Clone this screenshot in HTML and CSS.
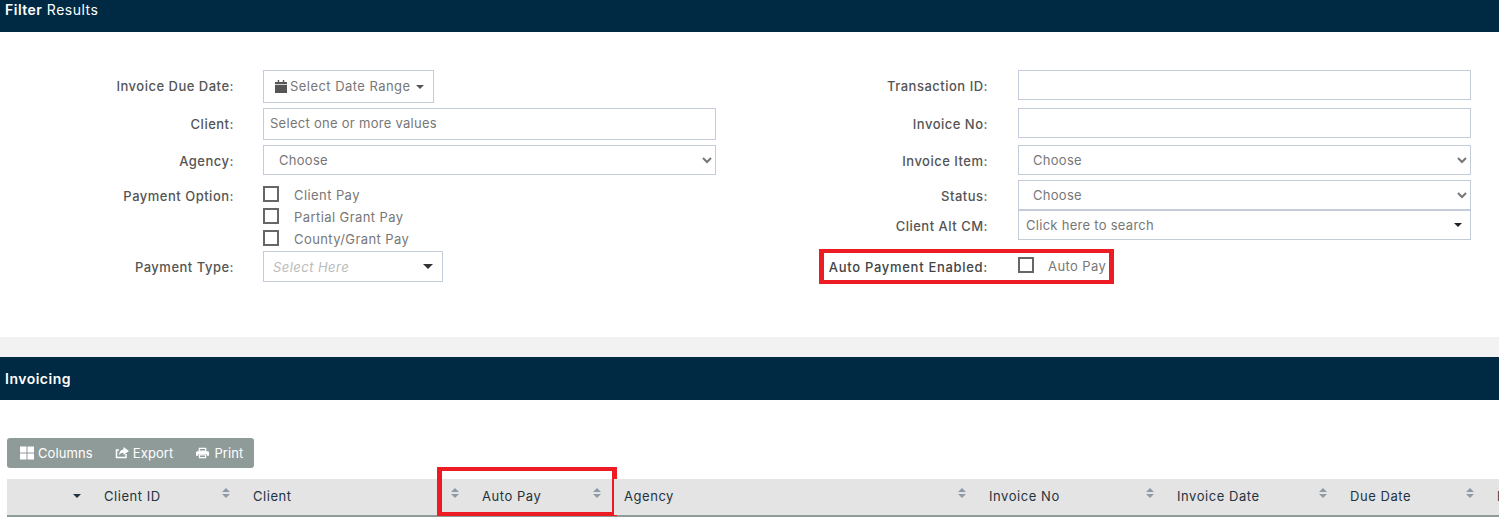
FILE: index.html
```html
<!DOCTYPE html>
<html lang="en">
<head>
<meta charset="utf-8">
<title>Invoicing</title>
<link rel="stylesheet" href="styles.css">
</head>
<body>
<header class="bar bar-filter"><strong>Filter</strong> Results</header>
<form class="filter">
  <div class="col">
    <div class="row row-date">
      <label class="lbl lbl-date">Invoice Due Date:</label>
      <button type="button" class="date-btn">
        <svg class="ico-cal" viewBox="0 0 13 14"><path d="M3 0h1.500v2H3zM8.500 0H10v2H8.500zM0 2h13v2.500H0zM0 5.500h13V14H0z" fill="#555"/></svg>
        <span class="date-txt">Select Date Range</span>
        <span class="caret"></span>
      </button>
    </div>
    <div class="row row-client">
      <label class="lbl">Client:</label>
      <input class="field field-tag" placeholder="Select one or more values">
    </div>
    <div class="row row-agency">
      <label class="lbl lbl-low">Agency:</label>
      <select class="field field-select"><option>Choose</option></select>
    </div>
    <div class="row row-options">
      <label class="lbl lbl-options">Payment Option:</label>
      <div class="options">
        <label class="opt"><input type="checkbox" class="cb"><span>Client Pay</span></label>
        <label class="opt"><input type="checkbox" class="cb"><span>Partial Grant Pay</span></label>
        <label class="opt"><input type="checkbox" class="cb"><span>County/Grant Pay</span></label>
      </div>
    </div>
    <div class="row row-type">
      <label class="lbl">Payment Type:</label>
      <div class="combo"><em>Select Here</em><span class="caret caret-lg"></span></div>
    </div>
  </div>
  <div class="col col-right">
    <div class="row row-r1">
      <label class="lbl lbl-r lbl-low">Transaction ID:</label>
      <input class="field">
    </div>
    <div class="row row-r2">
      <label class="lbl lbl-r lbl-low">Invoice No:</label>
      <input class="field">
    </div>
    <div class="row row-r3">
      <label class="lbl lbl-r lbl-low">Invoice Item:</label>
      <select class="field field-select field-select-r"><option>Choose</option></select>
    </div>
    <div class="row row-r4">
      <label class="lbl lbl-r lbl-low">Status:</label>
      <select class="field field-select field-select-r"><option>Choose</option></select>
    </div>
    <div class="row row-r5">
      <label class="lbl lbl-r lbl-low">Client Alt CM:</label>
      <div class="field search"><span>Click here to search</span><span class="caret caret-dark"></span></div>
    </div>
    <div class="row row-r6">
      <label class="lbl lbl-r lbl-strong">Auto Payment Enabled:</label>
      <label class="opt opt-auto"><input type="checkbox" class="cb"><span>Auto Pay</span></label>
      <span class="mark mark-form"></span>
    </div>
  </div>
</form>
<div class="gap"></div>
<header class="bar bar-invoicing"><strong>Invoicing</strong></header>
<section class="results">
  <div class="toolbar">
    <span class="tool">
      <svg class="ico" viewBox="0 0 14 14"><path d="M0 0.500h6.500v6H0zM7.500 0.500H14v6H7.500zM0 7.500h6.500v6H0zM7.500 7.500H14v6H7.500z" fill="#fff"/></svg>Columns
    </span>
    <span class="tool">
      <svg class="ico" viewBox="0 0 14 14"><path d="M11 8v3.500H1.500V4H4" fill="none" stroke="#fff" stroke-width="1.500"/><path d="M8.500 1L14 5 8.500 9V6.700C6 6.700 4.800 7.500 4 9.500 4 6 6 3.600 8.500 3.400z" fill="#fff"/></svg>Export
    </span>
    <span class="tool tool-print">
      <svg class="ico" viewBox="0 0 14 14"><path d="M3.500 2h7v3h-7z" fill="none" stroke="#fff" stroke-width="1.300"/><path d="M1.500 5h11q1.500 0 1.500 1.500V10h-2.500V8h-9v2H0V6.500Q0 5 1.500 5z" fill="#fff"/><path d="M3.700 9h6.600v3h-6.600z" fill="none" stroke="#fff" stroke-width="1.300"/></svg>Print
    </span>
  </div>
  <table class="grid">
    <thead>
      <tr>
        <th class="c-ctl"><span class="sort-one"></span></th>
        <th class="c-id">Client ID<span class="sort"></span></th>
        <th class="c-client">Client<span class="sort"></span></th>
        <th class="c-auto">Auto Pay<span class="sort"></span><span class="mark mark-th"></span></th>
        <th class="c-agency">Agency<span class="sort"></span></th>
        <th class="c-inv">Invoice No<span class="sort"></span></th>
        <th class="c-date">Invoice Date<span class="sort"></span></th>
        <th class="c-due">Due Date<span class="sort"></span></th>
        <th class="c-last">Invoice Item<span class="sort"></span></th>
      </tr>
    </thead>
  </table>
</section>
</body>
</html>
```
FILE: styles.css
```css
* { box-sizing: border-box; }
html, body { margin: 0; padding: 0; overflow: hidden; }
body {
  width: 1499px;
  background: #fff;
  color: #555;
  font-family: Inter, "Open Sans", "Liberation Sans", sans-serif;
  font-size: 13px;
}
.bar {
  background: #002a43;
  color: #fff;
  padding-left: 5px;
  font-size: 14px;
  font-weight: 400;
  letter-spacing: .5px;
}
.bar strong { font-weight: 600; }
.bar-filter { height: 32px; padding-top: 1px; line-height: 18px; }
.bar-invoicing { height: 43px; line-height: 43px; }

.filter {
  display: grid;
  grid-template-columns: 749px 1fr;
  padding: 38px 0 53px;
}
.row { display: flex; align-items: center; position: relative; }
.lbl {
  width: 234px;
  margin-right: 29px;
  text-align: right;
  font-weight: 500;
  color: #555;
  flex: none;
  letter-spacing: .5px;
}
.lbl-r { width: 239px; margin-right: 30px; }
.lbl-low { padding-top: 2px; }
.lbl-date { padding-bottom: 2px; }
.field {
  width: 453px;
  border: 1px solid #c4cbd9;
  background: #fff;
  color: #777;
  font: inherit;
  height: 30px;
  flex: none;
  outline: 0;
  padding: 0 6px 2px;
  border-radius: 0;
  letter-spacing: .28px;
}
.field::placeholder { color: #777; opacity: 1; }
.field-select { padding: 0 0 0 11px; }
.field-select-r { padding-left: 10px; }
.row-date { height: 33px; }
.date-btn {
  width: 171px;
  height: 33px;
  border: 1px solid #c4cbd9;
  background: #fff;
  color: #777;
  font: inherit;
  letter-spacing: .45px;
  padding: 0 0 0 11px;
  display: flex;
  align-items: center;
  gap: 3px;
  white-space: nowrap;
}
.date-txt { position: relative; top: -1px; }
.ico-cal { width: 12px; height: 13px; flex: none; }
.caret {
  display: inline-block;
  width: 0; height: 0;
  border-left: 4px solid transparent;
  border-right: 4px solid transparent;
  border-top: 4px solid #555;
  margin-left: 2px;
}
.row-client { margin-top: 5px; }
.row-client .field { height: 32px; }
.row-agency { margin-top: 5px; }
.row-options { margin-top: 11px; align-items: flex-start; }
.lbl-options { padding-top: 2px; }
.options { display: flex; flex-direction: column; gap: 6px; }
.opt {
  display: flex;
  align-items: center;
  height: 16px;
  color: #777;
  letter-spacing: .42px;
}
.opt span { margin-left: 15px; position: relative; top: 1px; }
.cb {
  appearance: none;
  margin: 0;
  width: 16px;
  height: 16px;
  border: 2px solid #666;
  background: #fff;
  flex: none;
}
.row-type { margin-top: 5px; }
.combo {
  width: 180px;
  height: 31px;
  border: 1px solid #c4cbd9;
  display: flex;
  align-items: center;
  justify-content: space-between;
  padding: 0 9px;
  color: #bbb;
  letter-spacing: .45px;
}
.caret-lg {
  border-left-width: 5px;
  border-right-width: 5px;
  border-top: 5px solid #333;
}
.row-r2 { margin-top: 8px; }
.row-r3 { margin-top: 7px; }
.row-r4 { margin-top: 5px; }
.search {
  display: flex;
  align-items: center;
  justify-content: space-between;
  padding: 0 8px 0 7px;
}
.caret-dark { border-top-color: #222; }
.row-r6 { margin-top: 9px; height: 35px; }
.opt-auto { align-self: flex-start; margin-top: 8px; }
.opt-auto span { margin-left: 14px; }
.lbl-strong { color: #444; letter-spacing: .7px; }

.mark { position: absolute; border-style: solid; border-color: #ed1c24; border-width: 4px 5px; pointer-events: none; }
.mark-form { left: 70px; top: 0; width: 295px; height: 35px; }
.mark-th { left: -35px; top: -12px; width: 180px; height: 49px; }

.gap { height: 20px; background: #f2f2f2; }

.results { padding: 38px 0 0 7px; overflow: hidden; }
.toolbar {
  display: flex;
  width: 247px;
  height: 30px;
  background: #8f9b99;
  border-radius: 3px;
  padding-left: 13px;
  gap: 22px;
  align-items: center;
  color: #fff;
  letter-spacing: .1px;
}
.tool { display: flex; align-items: center; gap: 4px; }
.tool-print { gap: 5px; margin-left: 1px; }
.tool-print .ico { width: 13px; }
.ico { width: 14px; height: 14px; flex: none; }

.grid {
  margin-top: 11px;
  border-collapse: collapse;
  table-layout: fixed;
  width: 1580px;
}
.grid th {
  position: relative;
  height: 37px;
  padding: 0 0 3px 10px;
  background: #e4e4e4;
  border-bottom: 2px solid #8f9b99;
  color: #1f3340;
  font-weight: 400;
  text-align: left;
  letter-spacing: .55px;
  white-space: nowrap;
}
.c-ctl { width: 87px; }
.c-id { width: 149px; }
.c-client { width: 229px; }
.c-auto { width: 142px; }
.c-agency { width: 365px; }
.c-inv { width: 188px; }
.c-date { width: 173px; }
.c-due { width: 147px; }
.c-last { width: 100px; }
.sort, .sort-one { position: absolute; right: 13px; top: 9px; width: 8px; height: 12px; }
.sort::before, .sort::after {
  content: "";
  position: absolute;
  left: 0;
  border-left: 4px solid transparent;
  border-right: 4px solid transparent;
}
.sort::before { top: 0; border-bottom: 4px solid #8e9ba6; }
.sort::after { top: 6px; border-top: 4px solid #8e9ba6; }
.sort-one::after {
  content: "";
  position: absolute;
  left: 0;
  top: 6px;
  border-left: 4px solid transparent;
  border-right: 4px solid transparent;
  border-top: 4px solid #1f3340;
}
```
